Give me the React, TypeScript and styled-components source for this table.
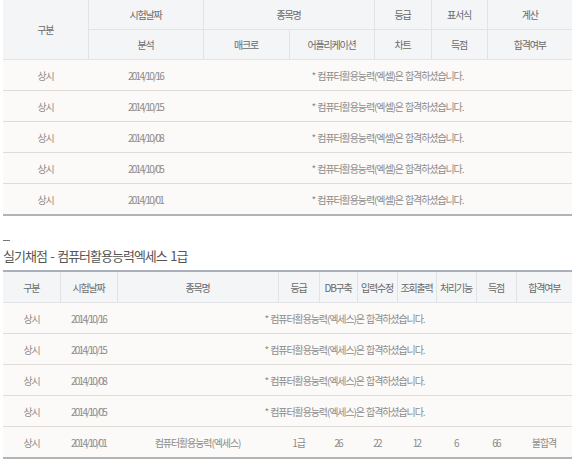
import React from "react";
import styled, { createGlobalStyle } from "styled-components";

const Global = createGlobalStyle`
  html, body { margin: 0; padding: 0; background: #fff; }
  body { font-family: "Noto Sans CJK KR", "Noto Sans", sans-serif; }
`;

const Page = styled.div`
  display: flex;
  flex-direction: column;
  padding: 0 4px 0 3px;
  width: 569px;
`;

const Table = styled.table<{ $top?: boolean }>`
  width: 569px;
  table-layout: fixed;
  border-collapse: collapse;
  border-top: ${(p) => (p.$top ? "2px solid #a9afbb" : "none")};
  border-bottom: 2px solid #b4b4b4;
`;

const HeadCell = styled.th<{ $h?: number; $noLeft?: boolean }>`
  height: ${(p) => p.$h ?? 29}px;
  padding: 0;
  background: #f4f5f7;
  color: #6a6a6a;
  font-size: 10px;
  font-weight: normal;
  letter-spacing: -1.2px;
  text-align: center;
  white-space: nowrap;
  border-left: ${(p) => (p.$noLeft ? "none" : "1px solid #e2e3e6")};
  border-bottom: 1px solid #e2e3e6;
`;

const Row = styled.tr`
  background: #fcfaf8;
  border-bottom: 1px solid #e1dcd7;
`;

const Cell = styled.td<{ $num?: boolean }>`
  height: 30px;
  padding: 0;
  color: #8c8c8c;
  font-size: 10px;
  letter-spacing: ${(p) => (p.$num ? "-1.7px" : "-1.1px")};
  word-spacing: 1px;
  text-align: center;
  white-space: nowrap;
`;

const TitleBlock = styled.div`
  display: flex;
  flex-direction: column;
  gap: 8px;
  padding: 24px 0 7px;
`;

const Dash = styled.span`
  width: 7px;
  height: 1px;
  background: #777;
`;

const Title = styled.h3`
  margin: 0;
  font-size: 13px;
  font-weight: normal;
  color: #555;
  letter-spacing: -1px;
  word-spacing: 1.5px;
  line-height: 14px;
`;

const topDates = ["2014/10/16", "2014/10/15", "2014/10/08", "2014/10/05", "2014/10/01"];
const bottomDates = ["2014/10/16", "2014/10/15", "2014/10/08", "2014/10/05"];

export default function App() {
  return (
    <Page>
      <Global />
      <Table>
        <colgroup>
          {[85, 115, 86, 85, 57, 56, 85].map((w, i) => (
            <col key={i} style={{ width: w }} />
          ))}
        </colgroup>
        <thead>
          <tr>
            <HeadCell rowSpan={2} $noLeft $h={59}>구분</HeadCell>
            <HeadCell>시험날짜</HeadCell>
            <HeadCell colSpan={2}>종목명</HeadCell>
            <HeadCell>등급</HeadCell>
            <HeadCell>표서식</HeadCell>
            <HeadCell>계산</HeadCell>
          </tr>
          <tr>
            <HeadCell>분석</HeadCell>
            <HeadCell>매크로</HeadCell>
            <HeadCell>어플리케이션</HeadCell>
            <HeadCell>차트</HeadCell>
            <HeadCell>득점</HeadCell>
            <HeadCell>합격여부</HeadCell>
          </tr>
        </thead>
        <tbody>
          {topDates.map((d) => (
            <Row key={d}>
              <Cell>상시</Cell>
              <Cell $num>{d}</Cell>
              <Cell colSpan={5}>* 컴퓨터활용능력(엑셀)은 합격하셨습니다.</Cell>
            </Row>
          ))}
        </tbody>
      </Table>

      <TitleBlock>
        <Dash />
        <Title>실기채점 - 컴퓨터활용능력엑세스 1급</Title>
      </TitleBlock>

      <Table $top>
        <colgroup>
          {[57, 57, 161, 41, 38, 40, 39, 40, 40, 56].map((w, i) => (
            <col key={i} style={{ width: w }} />
          ))}
        </colgroup>
        <thead>
          <tr>
            <HeadCell $noLeft $h={30}>구분</HeadCell>
            <HeadCell $h={30}>시험날짜</HeadCell>
            <HeadCell $h={30}>종목명</HeadCell>
            <HeadCell $h={30}>등급</HeadCell>
            <HeadCell $h={30}>DB구축</HeadCell>
            <HeadCell $h={30}>입력수정</HeadCell>
            <HeadCell $h={30}>조회출력</HeadCell>
            <HeadCell $h={30}>처리기능</HeadCell>
            <HeadCell $h={30}>득점</HeadCell>
            <HeadCell $h={30}>합격여부</HeadCell>
          </tr>
        </thead>
        <tbody>
          {bottomDates.map((d) => (
            <Row key={d}>
              <Cell>상시</Cell>
              <Cell $num>{d}</Cell>
              <Cell colSpan={8}>* 컴퓨터활용능력(엑세스)은 합격하셨습니다.</Cell>
            </Row>
          ))}
          <Row>
            <Cell>상시</Cell>
            <Cell $num>2014/10/01</Cell>
            <Cell>컴퓨터활용능력(엑세스)</Cell>
            <Cell>1급</Cell>
            <Cell $num>26</Cell>
            <Cell $num>22</Cell>
            <Cell $num>12</Cell>
            <Cell $num>6</Cell>
            <Cell $num>66</Cell>
            <Cell>불합격</Cell>
          </Row>
        </tbody>
      </Table>
    </Page>
  );
}
